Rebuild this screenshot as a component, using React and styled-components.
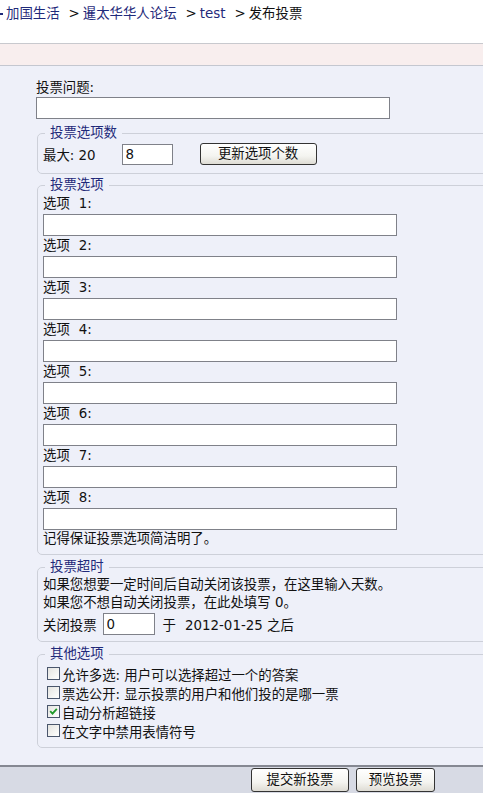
import React from "react";
import styled, { createGlobalStyle } from "styled-components";

const GlobalStyle = createGlobalStyle`
  * {
    box-sizing: border-box;
  }
  body {
    margin: 0;
    background: #fff;
    color: #111;
    font-family: "DejaVu Sans", "Noto Sans CJK SC", sans-serif;
    font-size: 13.4px;
  }
`;

const Crumbs = styled.div`
  display: flex;
  align-items: center;
  height: 44px;
  padding: 5px 0 21px 0;
  line-height: 18px;
  white-space: nowrap;
  overflow: hidden;
  border-bottom: 1px solid #c8c9ce;
`;

const Crumb = styled.a`
  color: #1f2a7a;
  text-decoration: none;
`;

const Lead = styled.span`
  display: inline-block;
  width: 3px;
  height: 2px;
  margin: 1px 3px 0 0;
  background: #1f2a7a;
`;

const Sep = styled.span`
  margin: 0 3px 0 9px;
`;

const Notice = styled.div`
  height: 22px;
  background: #f8eeee;
  border-bottom: 1px solid #c4c7d0;
`;

const Panel = styled.div`
  background: #eef0f9;
  padding: 13px 0 17px 36px;
  overflow: hidden;
`;

const Label = styled.div`
  line-height: ${(p) => p.$lh || 18}px;
`;

const Num = styled.span`
  margin-left: 9px;
`;

const TextInput = styled.input`
  display: block;
  width: ${(p) => p.$w}px;
  height: ${(p) => p.$h || 21}px;
  margin: 0;
  padding: 0 3px;
  border: 1px solid #7f8189;
  background: #fff;
  color: #111;
  font: inherit;
  outline: none;
`;

const Group = styled.fieldset`
  margin: ${(p) => p.$mt}px -14px 0 1px;
  padding: ${(p) => p.$pt || 0}px 6px ${(p) => p.$pb}px 5px;
  border: 1px solid #cdd0d9;
  border-radius: 5px;
  min-width: 0;
`;

const Legend = styled.legend`
  margin-left: 2px;
  padding: 0 5px;
  line-height: 18px;
  color: #1f2a7a;
`;

const Row = styled.div`
  display: flex;
  align-items: center;
  height: 24px;
`;

const Spacer = styled.span`
  display: inline-block;
  flex: none;
  width: ${(p) => p.$w}px;
`;

const Button = styled.button`
  width: ${(p) => p.$w}px;
  height: ${(p) => p.$h || 24}px;
  margin: 0;
  padding: 0;
  border: 1px solid #333;
  border-radius: 3px;
  background: linear-gradient(#ffffff, #f4f4f0 60%, #dedcd4);
  color: #111;
  font: inherit;
  line-height: 1;
  cursor: pointer;
`;

const CheckRow = styled.label`
  display: flex;
  align-items: center;
  height: 19px;
  padding-left: 4px;
`;

const Box = styled.span`
  display: inline-flex;
  align-items: center;
  justify-content: center;
  width: 13px;
  height: 13px;
  margin-right: 2px;
  border: 1px solid #4a566c;
  background: linear-gradient(135deg, #e4e4e0, #ffffff);
`;

const Footer = styled.div`
  display: flex;
  justify-content: flex-end;
  align-items: center;
  gap: 7px;
  height: 28px;
  padding-right: 48px;
  border-top: 2px solid #858892;
  background: #d7dae4;
`;

const options = [1, 2, 3, 4, 5, 6, 7, 8];

const others = [
  { text: "允许多选: 用户可以选择超过一个的答案", on: false },
  { text: "票选公开: 显示投票的用户和他们投的是哪一票", on: false },
  { text: "自动分析超链接", on: true },
  { text: "在文字中禁用表情符号", on: false },
];

const Check = ({ on }) => (
  <Box>
    {on && (
      <svg width="9" height="9" viewBox="0 0 9 9">
        <path d="M1.2 4.2 L3.5 6.6 L7.8 1.8" fill="none" stroke="#1f9a2a" strokeWidth="1.8" />
      </svg>
    )}
  </Box>
);

export default function App() {
  return (
    <>
      <GlobalStyle />
      <Crumbs>
        <Lead />
        <Crumb href="#">加国生活</Crumb>
        <Sep>&gt;</Sep>
        <Crumb href="#">暹太华华人论坛</Crumb>
        <Sep>&gt;</Sep>
        <Crumb href="#">test</Crumb>
        <Sep>&gt;</Sep>
        <span>发布投票</span>
      </Crumbs>
      <Notice />
      <Panel>
        <Label>投票问题:</Label>
        <TextInput $w={354} $h={22} />

        <Group $mt={5} $pb={7}>
          <Legend>投票选项数</Legend>
          <Row>
            <span>最大: 20</span>
            <Spacer $w={26} />
            <TextInput $w={51} defaultValue="8" />
            <Spacer $w={27} />
            <Button type="button" $w={117} $h={22}>
              更新选项个数
            </Button>
          </Row>
        </Group>

        <Group $mt={2} $pb={6}>
          <Legend>投票选项</Legend>
          {options.map((n) => (
            <div key={n}>
              <Label $lh={20}>
                选项<Num>{n}:</Num>
              </Label>
              <TextInput $w={354} $h={22} />
            </div>
          ))}
          <Label>记得保证投票选项简洁明了。</Label>
        </Group>

        <Group $mt={3} $pb={5}>
          <Legend>投票超时</Legend>
          <Label>如果您想要一定时间后自动关闭该投票，在这里输入天数。</Label>
          <Label>如果您不想自动关闭投票，在此处填写 0。</Label>
          <Row>
            <span>关闭投票</span>
            <Spacer $w={6} />
            <TextInput $w={52} $h={22} defaultValue="0" />
            <Spacer $w={8} />
            <span>于</span>
            <Spacer $w={9} />
            <span>2012-01-25 之后</span>
          </Row>
        </Group>

        <Group $mt={3} $pt={1} $pb={7}>
          <Legend>其他选项</Legend>
          {others.map((o) => (
            <CheckRow key={o.text}>
              <Check on={o.on} />
              <span>{o.text}</span>
            </CheckRow>
          ))}
        </Group>
      </Panel>
      <Footer>
        <Button type="button" $w={98}>
          提交新投票
        </Button>
        <Button type="button" $w={79}>
          预览投票
        </Button>
      </Footer>
    </>
  );
}
